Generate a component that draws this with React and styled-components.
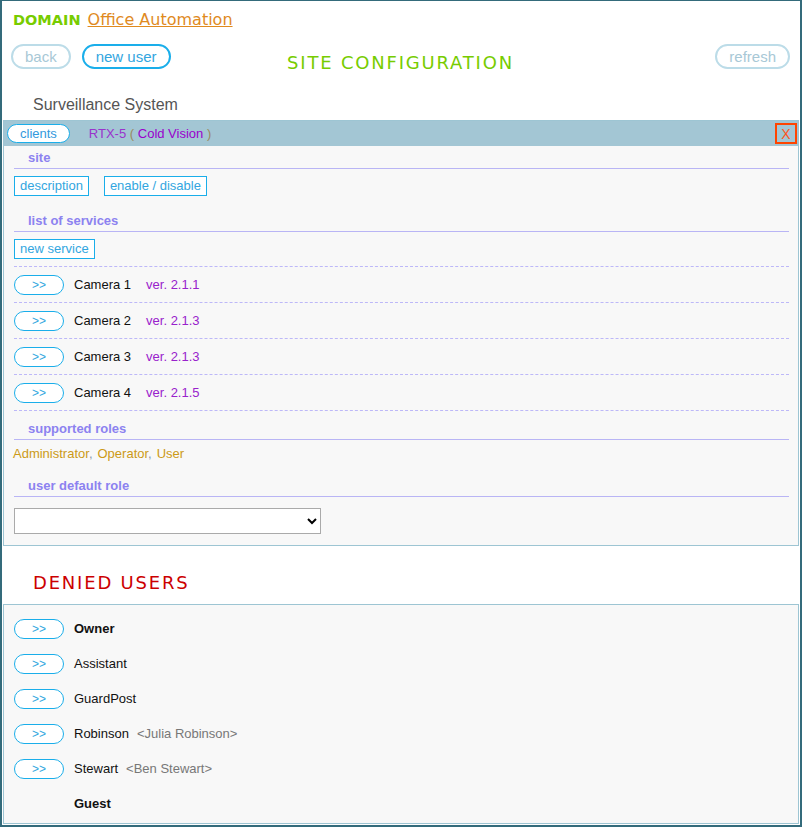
import React from "react";
import styled, { createGlobalStyle } from "styled-components";

const GlobalStyle = createGlobalStyle`
  html, body {
    margin: 0;
    padding: 0;
    background: #ffffff;
  }
  body {
    font-family: "Liberation Sans", Arial, sans-serif;
  }
`;

const Frame = styled.div`
  width: 802px;
  height: 827px;
  box-sizing: border-box;
  border: 2px solid #346b7b;
  border-top-width: 1px;
  background: #ffffff;
  overflow: hidden;
`;

const DomainLine = styled.div`
  padding: 8px 0 0 11px;
  line-height: 22px;
  display: flex;
  align-items: baseline;
  gap: 7px;
`;

const DomainLabel = styled.span`
  font-family: "DejaVu Sans", Verdana, sans-serif;
  font-weight: bold;
  font-size: 14.5px;
  color: #77cc00;
`;

const DomainLink = styled.a`
  font-family: "DejaVu Sans", Verdana, sans-serif;
  font-size: 16px;
  color: #e08a1e;
  text-decoration: underline;
`;

const Toolbar = styled.div`
  margin-top: 13px;
  padding: 0 10px 0 9px;
  display: grid;
  grid-template-columns: 1fr auto 1fr;
  align-items: start;
`;

const ButtonGroup = styled.div`
  display: flex;
  gap: 11px;
  justify-content: ${(p) => (p.$end ? "flex-end" : "flex-start")};
`;

const PillButton = styled.button`
  height: 25px;
  padding: 0 12px;
  border-radius: 13px;
  border: 2px solid ${(p) => (p.$active ? "#1aaeea" : "#bcdce8")};
  background: #ffffff;
  color: ${(p) => (p.$active ? "#33a6e0" : "#a8c8d6")};
  font-family: "Liberation Sans", Arial, sans-serif;
  font-size: 15px;
  line-height: 20px;
  cursor: pointer;
`;

const PageTitle = styled.h1`
  margin: 7px 0 0;
  font-family: "DejaVu Sans", Verdana, sans-serif;
  font-weight: normal;
  font-size: 18px;
  letter-spacing: 1.8px;
  line-height: 24px;
  color: ${(p) => p.$color};
`;

const SystemName = styled.div`
  margin-top: 20px;
  padding-left: 31px;
  font-size: 16px;
  line-height: 20px;
  color: #555555;
`;

const Panel = styled.div`
  margin: ${(p) => p.$top}px 1px 0;
  border: 1px solid #9dc5d3;
  background: #f8f8f8;
`;

const PanelHeader = styled.div`
  height: 25px;
  background: #a3c6d4;
  display: flex;
  align-items: center;
  padding: 0 1px 0 3px;
  font-size: 13px;
`;

const ClientsButton = styled.button`
  height: 19px;
  padding: 0 12px;
  border-radius: 10px;
  border: 1px solid #1aaeea;
  background: #ffffff;
  color: #3399dd;
  font-family: "Liberation Sans", Arial, sans-serif;
  font-size: 13px;
  line-height: 16px;
`;

const SiteName = styled.span`
  margin-left: 19px;
  color: #9933cc;
`;

const Paren = styled.span`
  color: #9a8a60;
`;

const ClientName = styled.span`
  color: #9900cc;
`;

const CloseButton = styled.button`
  margin-left: auto;
  width: 22px;
  height: 21px;
  padding: 0;
  border: 2px solid #ff4400;
  background: transparent;
  color: #ff5522;
  font-family: "Liberation Sans", Arial, sans-serif;
  font-size: 14px;
  line-height: 16px;
`;

const PanelBody = styled.div`
  padding: ${(p) => p.$pad};
`;

const SectionTitle = styled.div`
  margin-top: ${(p) => p.$top}px;
  padding: 4px 0 2px 14px;
  border-bottom: 1px solid #b9b5f5;
  font-size: 13px;
  font-weight: bold;
  line-height: 16px;
  color: #8c82f0;
`;

const ActionRow = styled.div`
  margin-top: 7px;
  display: flex;
  gap: 15px;
`;

const BoxButton = styled.button`
  height: 20px;
  padding: 0 5px;
  border: 1px solid #1aaeea;
  background: #ffffff;
  color: #33a6e0;
  font-family: "Liberation Sans", Arial, sans-serif;
  font-size: 13px;
  line-height: 16px;
`;

const ServiceList = styled.div`
  margin-top: 7px;
  border-top: 1px dashed #bdb8f8;
`;

const ItemRow = styled.div`
  height: 35px;
  display: flex;
  align-items: center;
  font-size: 13px;
  color: #111111;
  border-bottom: ${(p) => (p.$dashed ? "1px dashed #bdb8f8" : "none")};
`;

const OpenButton = styled.button`
  width: 50px;
  height: 20px;
  margin-right: 10px;
  padding: 0;
  border-radius: 10px;
  border: 1px solid #1aaeea;
  background: #ffffff;
  color: #33a6e0;
  font-family: "Liberation Sans", Arial, sans-serif;
  font-size: 12px;
  line-height: 16px;
`;

const Spacer = styled.span`
  display: inline-block;
  width: 50px;
  margin-right: 10px;
`;

const Version = styled.span`
  margin-left: 15px;
  color: #9922cc;
`;

const UserName = styled.span`
  font-weight: ${(p) => (p.$bold ? "bold" : "normal")};
`;

const FullName = styled.span`
  margin-left: 8px;
  color: #777777;
`;

const Roles = styled.div`
  margin: 6px 0 0 -1px;
  font-size: 13px;
  line-height: 16px;
  color: #cc9a17;
`;

const Comma = styled.span`
  color: #8899aa;
  margin-right: 5px;
`;

const RoleSelect = styled.select`
  display: block;
  margin-top: 11px;
  width: 307px;
  height: 26px;
  border: 1px solid #aaaaaa;
  border-radius: 0;
  background: #ffffff;
  font-family: "Liberation Sans", Arial, sans-serif;
  font-size: 13px;
`;

const DeniedTitle = styled(PageTitle)`
  margin: 25px 0 0 31px;
`;

const services = [
  { name: "Camera 1", version: "ver. 2.1.1" },
  { name: "Camera 2", version: "ver. 2.1.3" },
  { name: "Camera 3", version: "ver. 2.1.3" },
  { name: "Camera 4", version: "ver. 2.1.5" },
];

const roles = ["Administrator", "Operator", "User"];

const deniedUsers = [
  { name: "Owner", bold: true, open: true },
  { name: "Assistant", open: true },
  { name: "GuardPost", open: true },
  { name: "Robinson", full: "<Julia Robinson>", open: true },
  { name: "Stewart", full: "<Ben Stewart>", open: true },
  { name: "Guest", bold: true, open: false },
];

export default function App() {
  return (
    <>
      <GlobalStyle />
      <Frame>
        <DomainLine>
          <DomainLabel>DOMAIN</DomainLabel>
          <DomainLink href="#">Office Automation</DomainLink>
        </DomainLine>

        <Toolbar>
          <ButtonGroup>
            <PillButton>back</PillButton>
            <PillButton $active>new user</PillButton>
          </ButtonGroup>
          <PageTitle $color="#77cc00">SITE CONFIGURATION</PageTitle>
          <ButtonGroup $end>
            <PillButton>refresh</PillButton>
          </ButtonGroup>
        </Toolbar>

        <SystemName>Surveillance System</SystemName>

        <Panel $top={5}>
          <PanelHeader>
            <ClientsButton>clients</ClientsButton>
            <SiteName>
              RTX-5 <Paren>(</Paren> <ClientName>Cold Vision</ClientName>{" "}
              <Paren>)</Paren>
            </SiteName>
            <CloseButton>X</CloseButton>
          </PanelHeader>
          <PanelBody $pad="0 9px 11px 10px">
            <SectionTitle $top={0}>site</SectionTitle>
            <ActionRow>
              <BoxButton>description</BoxButton>
              <BoxButton>enable / disable</BoxButton>
            </ActionRow>

            <SectionTitle $top={13}>list of services</SectionTitle>
            <ActionRow>
              <BoxButton>new service</BoxButton>
            </ActionRow>
            <ServiceList>
              {services.map((s) => (
                <ItemRow key={s.name} $dashed>
                  <OpenButton>&gt;&gt;</OpenButton>
                  <span>{s.name}</span>
                  <Version>{s.version}</Version>
                </ItemRow>
              ))}
            </ServiceList>

            <SectionTitle $top={6}>supported roles</SectionTitle>
            <Roles>
              {roles.map((r, i) => (
                <React.Fragment key={r}>
                  {r}
                  {i < roles.length - 1 && <Comma>,</Comma>}
                </React.Fragment>
              ))}
            </Roles>

            <SectionTitle $top={12}>user default role</SectionTitle>
            <RoleSelect defaultValue="">
              <option value=""></option>
            </RoleSelect>
          </PanelBody>
        </Panel>

        <DeniedTitle $color="#cc0000">DENIED USERS</DeniedTitle>

        <Panel $top={9}>
          <PanelBody $pad="6px 9px 2px 10px">
            {deniedUsers.map((u) => (
              <ItemRow key={u.name}>
                {u.open ? <OpenButton>&gt;&gt;</OpenButton> : <Spacer />}
                <UserName $bold={u.bold}>{u.name}</UserName>
                {u.full && <FullName>{u.full}</FullName>}
              </ItemRow>
            ))}
          </PanelBody>
        </Panel>
      </Frame>
    </>
  );
}
